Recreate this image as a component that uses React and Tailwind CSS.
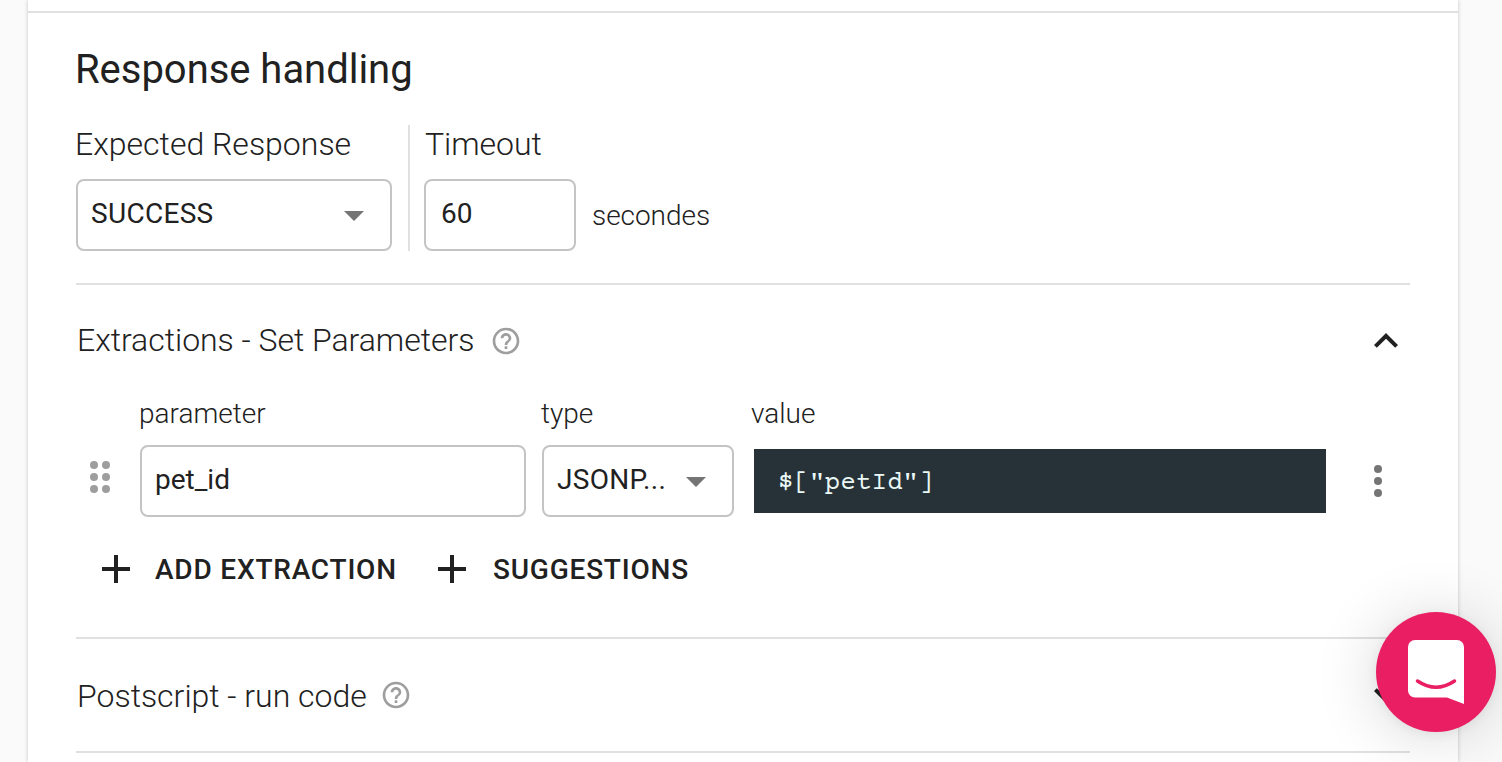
const CaretIcon = () => (
  <svg width="20" height="10" viewBox="0 0 20 10" className="mt-0.5 shrink-0 fill-[#757575]">
    <path d="M0 0h20L10 10z" />
  </svg>
);

const HelpIcon = () => (
  <svg width="32" height="32" viewBox="0 0 24 24" className="shrink-0 fill-[#9e9e9e]">
    <path d="M11 18h2v-2h-2v2zm1-16C6.48 2 2 6.48 2 12s4.48 10 10 10 10-4.48 10-10S17.52 2 12 2zm0 18c-4.41 0-8-3.59-8-8s3.59-8 8-8 8 3.59 8 8-3.59 8-8 8zm0-14c-2.21 0-4 1.79-4 4h2c0-1.1.9-2 2-2s2 .9 2 2c0 2-3 1.75-3 5h2c0-2.25 3-2.5 3-5 0-2.21-1.79-4-4-4z" />
  </svg>
);

const PlusIcon = () => (
  <svg width="28" height="28" viewBox="0 0 28 28" className="shrink-0 fill-[#212121]">
    <path d="M12 0h4v12h12v4H16v12h-4V16H0v-4h12z" />
  </svg>
);

const ChevronIcon = ({ down }) => (
  <svg
    width="48"
    height="48"
    viewBox="0 0 24 24"
    className={down ? "shrink-0 rotate-180 fill-[#212121]" : "shrink-0 fill-[#212121]"}
  >
    <path d="M12 8l-6 6 1.41 1.41L12 10.83l4.59 4.58L18 14z" />
  </svg>
);

const DragIcon = () => (
  <svg width="20" height="32" viewBox="0 0 20 32" className="shrink-0 fill-[#9e9e9e]">
    <circle cx="4" cy="4" r="4" />
    <circle cx="16" cy="4" r="4" />
    <circle cx="4" cy="16" r="4" />
    <circle cx="16" cy="16" r="4" />
    <circle cx="4" cy="28" r="4" />
    <circle cx="16" cy="28" r="4" />
  </svg>
);

const MoreIcon = () => (
  <svg width="8" height="32" viewBox="0 0 8 32" className="shrink-0 fill-[#757575]">
    <circle cx="4" cy="4" r="4" />
    <circle cx="4" cy="16" r="4" />
    <circle cx="4" cy="28" r="4" />
  </svg>
);

const ChatLauncher = () => (
  <button className="absolute left-[1376px] top-[612px] flex size-[120px] items-center justify-center rounded-full bg-[#e91e63] shadow-[0_2px_12px_rgba(0,0,0,0.06),0_4px_64px_rgba(0,0,0,0.16)]">
    <svg width="56" height="64" viewBox="0 0 56 64">
      <path
        d="M7 0h42a7 7 0 0 1 7 7v57l-17-6.500H7a7 7 0 0 1-7-7V7a7 7 0 0 1 7-7z"
        fill="#fff"
      />
      <path d="M9.500 41Q28 53.500 46.500 41" fill="none" stroke="#e91e63" strokeWidth="3.500" strokeLinecap="round" />
    </svg>
  </button>
);

const SectionHeader = ({ title, down }) => (
  <div className="flex h-28 items-center justify-between pl-px">
    <div className={down ? "flex items-center gap-[13px]" : "flex items-center gap-4"}>
      <h3
        className={
          down
            ? "pt-0.5 text-[32px] font-light leading-10 tracking-[-0.01px]"
            : "pb-0.5 text-[32px] font-light leading-10 tracking-[-0.03px]"
        }
      >
        {title}
      </h3>
      <HelpIcon />
    </div>
    <ChevronIcon down={down} />
  </div>
);

export default function App() {
  return (
    <div className="relative h-[762px] w-[1502px] overflow-hidden bg-[#fafafa] px-7 font-['Roboto',sans-serif] text-[#212121]">
      <main className="mr-4 h-full w-[1430px] bg-white shadow-[0_0_4px_rgba(0,0,0,0.22)]">
        <div className="h-[13px] border-b-2 border-[#e0e0e0]" />
        <div className="px-12">
          <section className="h-[272px] border-b-2 border-[#e0e0e0] pt-[33px]">
            <h2 className="-ml-px text-[40px] leading-[48px] tracking-[-0.03px]">Response handling</h2>
            <div className="mt-[31px] flex h-[126px]">
              <div className="w-[332px]">
                <label className="-ml-px block h-[54px] text-[32px] font-light leading-[38px]">
                  Expected Response
                </label>
                <div className="flex h-[72px] w-[316px] items-center justify-between rounded-lg border-2 border-[#c4c4c4] pl-[13px] pr-[26px]">
                  <span className="-mt-0.5 text-[28px] tracking-[0.3px]">SUCCESS</span>
                  <CaretIcon />
                </div>
              </div>
              <div className="border-l-2 border-[#e0e0e0] pl-[14px]">
                <label className="block h-[54px] pl-px text-[32px] font-light leading-[38px] tracking-[-0.03px]">
                  Timeout
                </label>
                <div className="flex items-center gap-4">
                  <div className="flex h-[72px] w-[152px] items-center rounded-lg border-2 border-[#c4c4c4] pl-[15px]">
                    <span className="-mt-0.5 text-[28px]">60</span>
                  </div>
                  <span className="pt-0.5 text-[28px] font-light tracking-[-0.05px]">secondes</span>
                </div>
              </div>
            </div>
          </section>

          <section className="h-[354px] border-b-2 border-[#e0e0e0]">
            <SectionHeader title="Extractions - Set Parameters" />
            <div className="flex h-12 pt-px text-[28px] font-light leading-8">
              <span className="ml-[63px] w-[402px]">parameter</span>
              <span className="w-[210px]">type</span>
              <span>value</span>
            </div>
            <div className="flex h-[72px] items-center pl-[14px]">
              <div className="-mt-2 flex w-[50px]">
                <DragIcon />
              </div>
              <div className="flex h-[72px] w-[386px] items-center rounded-lg border-2 border-[#c4c4c4] pl-[13px]">
                <span className="-mt-0.5 text-[28px]">pet_id</span>
              </div>
              <div className="ml-4 flex h-[72px] w-48 items-center justify-between rounded-lg border-2 border-[#c4c4c4] pl-[13px] pr-[26px]">
                <span className="-mt-0.5 text-[28px] tracking-[0.3px]">JSONP...</span>
                <CaretIcon />
              </div>
              <div className="ml-5 flex h-16 w-[572px] items-center bg-[#263238] pl-6 pt-1 font-['Courier_Prime','Liberation_Mono',monospace] text-[26px] text-[#e9f7f5]">
                $["petId"]
              </div>
              <div className="ml-12 flex">
                <MoreIcon />
              </div>
            </div>
            <div className="mt-8 flex h-10 items-center pl-[26px] text-[28px] font-medium">
              <button className="flex w-[336px] items-center gap-[25px]">
                <PlusIcon />
                <span className="pt-0.5 tracking-[0.8px]">ADD EXTRACTION</span>
              </button>
              <button className="flex items-center gap-[27px]">
                <PlusIcon />
                <span className="pt-0.5 tracking-[0.78px]">SUGGESTIONS</span>
              </button>
            </div>
          </section>

          <section className="border-b-2 border-[#e0e0e0]">
            <SectionHeader title="Postscript - run code" down />
          </section>
        </div>
      </main>
      <ChatLauncher />
    </div>
  );
}
